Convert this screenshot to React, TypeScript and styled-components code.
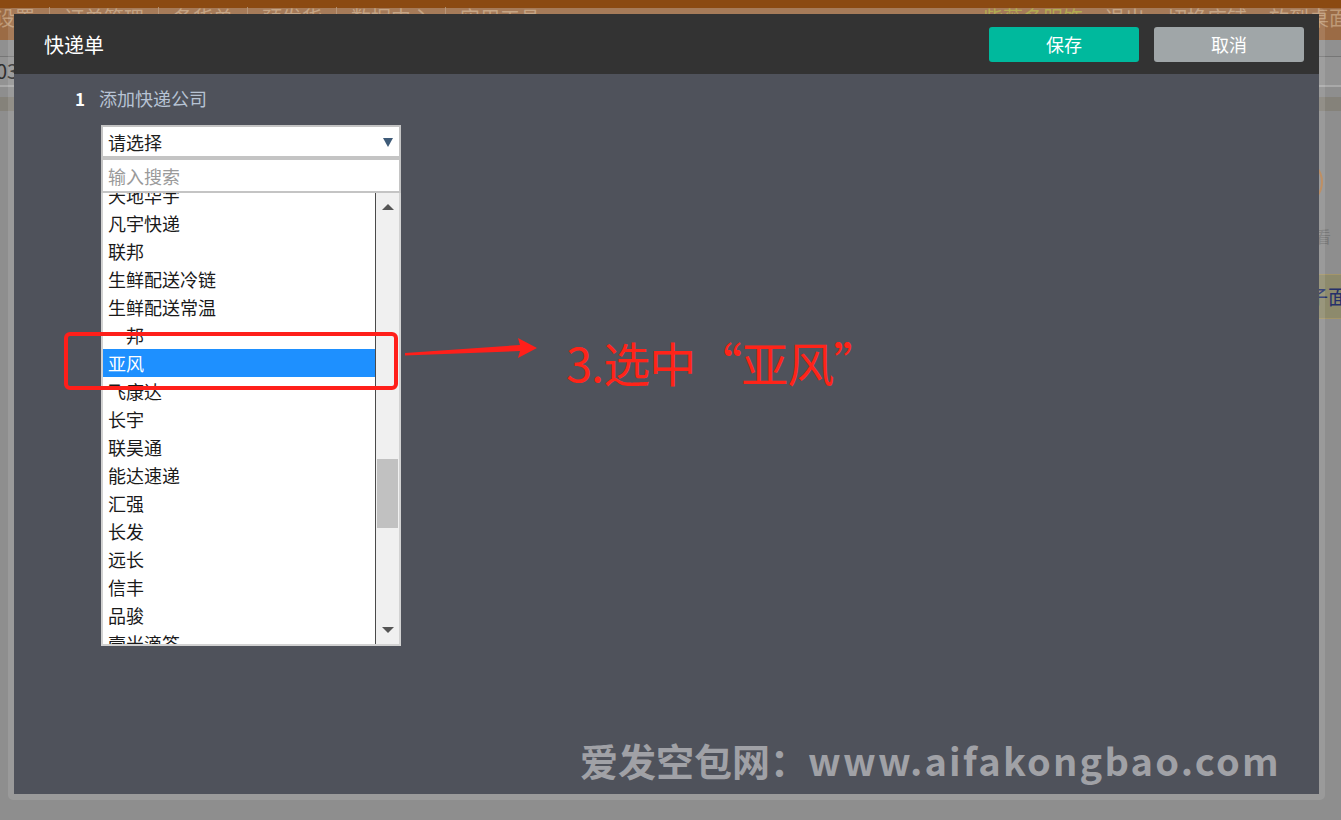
import styled, { createGlobalStyle } from 'styled-components';

const GlobalStyle = createGlobalStyle`
  html, body {
    margin: 0;
    padding: 0;
    background: #8e8e8e;
  }
  body {
    font-family: "Noto Sans CJK SC", "Noto Sans", "Liberation Sans", sans-serif;
  }
  * {
    box-sizing: border-box;
  }
`;

const Page = styled.div`
  position: relative;
  width: 1341px;
  height: 820px;
  overflow: hidden;
  background: #8e8e8e;
`;

// underlying (dimmed) shop page
const NavBar = styled.div`
  height: 40px;
  border-top: 8px solid #8b4a12;
  background: #9b6b45;
  display: flex;
  align-items: center;
  justify-content: space-between;
  font-size: 20px;
  line-height: 24px;
  color: #bf9a77;
`;

const NavGroup = styled.div<{ $edge: number }>`
  display: flex;
  align-items: center;
  margin-top: -12px;
  margin-left: ${(p) => (p.$edge < 0 ? `${p.$edge}px` : '0')};
  margin-right: ${(p) => (p.$edge > 0 ? `-${p.$edge}px` : '0')};
`;

const NavItem = styled.span<{ $accent?: boolean; $spaced?: boolean }>`
  color: ${(p) => (p.$accent ? '#aaa23c' : '#bf9a77')};
  margin-left: ${(p) => (p.$spaced ? '22px' : '0')};
  white-space: nowrap;
`;

const NavDivider = styled.span`
  width: 1px;
  height: 22px;
  background: #b08a68;
  margin: 0 14px;
`;

const SubBar = styled.div`
  height: 17px;
  background: #909090;
  border-bottom: 1px solid #767676;
`;

const InputRow = styled.div`
  height: 30px;
  background: #939393;
  border-bottom: 2px solid #a9a9a9;
  font-size: 20px;
  line-height: 28px;
  color: #2e2e2e;
  margin-left: -4px;
`;

const Spacer = styled.div`
  height: 10px;
`;

const ToolRow = styled.div`
  height: 14px;
  background: #85827a;
`;

const RightTools = styled.div`
  display: flex;
  flex-direction: column;
  align-items: flex-start;
  margin-left: 1283px;
  padding-top: 49px;
`;

const RoundIcon = styled.div`
  width: 40px;
  height: 44px;
  border-radius: 50%;
  border: 2px solid #b88250;
`;

const ToolLabel = styled.div`
  margin: 20px 0 0 16px;
  font-size: 16px;
  line-height: 24px;
  color: #777777;
  white-space: nowrap;
`;

const TanButton = styled.div`
  margin: 26px 0 0 -28px;
  height: 45px;
  padding: 0 12px;
  background: #8d8a6c;
  border: 1px solid #a3956a;
  font-size: 20px;
  line-height: 43px;
  color: #25306a;
  white-space: nowrap;
`;

// modal
const Modal = styled.div`
  position: absolute;
  top: 8px;
  left: 8px;
  width: 1317px;
  height: 792px;
  border: 6px solid rgba(255, 255, 255, 0.11);
  border-radius: 5px;
  display: flex;
  flex-direction: column;
`;

const ModalHeader = styled.div`
  height: 60px;
  background: #333333;
  display: flex;
  align-items: center;
  padding: 0 15px 0 30px;
`;

const ModalTitle = styled.div`
  flex: 1;
  font-size: 20px;
  color: #ffffff;
`;

const ActionButton = styled.div<{ $variant: 'primary' | 'secondary' }>`
  width: 150px;
  height: 35px;
  border-radius: 3px;
  background: ${(p) => (p.$variant === 'primary' ? '#00b99d' : '#a0a6a8')};
  color: #ffffff;
  font-size: 18px;
  line-height: 35px;
  text-align: center;
  margin-left: 15px;
`;

const ModalBody = styled.div`
  position: relative;
  flex: 1;
  background: #4f525b;
  padding: 12px 0 0 61px;
`;

const StepRow = styled.div`
  display: flex;
  align-items: center;
  height: 24px;
`;

const StepNum = styled.span`
  font-size: 17px;
  font-weight: 700;
  color: #ffffff;
  width: 24px;
`;

const StepText = styled.span`
  font-size: 18px;
  color: #b7c3d4;
`;

const Dropdown = styled.div`
  width: 300px;
  margin: 15px 0 0 26px;
`;

const SelectBox = styled.div`
  height: 33px;
  background: #ffffff;
  border: 2px solid #c4c4c4;
  display: flex;
  align-items: center;
  justify-content: space-between;
  padding: 0 6px 0 5px;
  font-size: 18px;
  color: #1e1e1e;
`;

const Caret = styled.span`
  width: 0;
  height: 0;
  border-left: 5px solid transparent;
  border-right: 5px solid transparent;
  border-top: 9px solid #3e5b78;
  margin-top: 2px;
`;

const SearchInput = styled.input`
  display: block;
  width: 100%;
  height: 35px;
  border: 2px solid #c4c4c4;
  padding: 0 5px;
  font-family: inherit;
  font-size: 18px;
  color: #333;
  outline: none;

  &::placeholder {
    color: #9a9a9a;
  }
`;

const ListBox = styled.div`
  height: 453px;
  background: #ffffff;
  border: 2px solid #d2d2d2;
  border-top: none;
  display: flex;
`;

const Options = styled.div`
  flex: 1;
  overflow: hidden;
`;

const OptionsInner = styled.div`
  margin-top: -12px;
`;

const Option = styled.div<{ $selected?: boolean }>`
  height: 28px;
  line-height: 28px;
  padding-left: 5px;
  font-size: 18px;
  white-space: nowrap;
  color: ${(p) => (p.$selected ? '#ffffff' : '#1a1a1a')};
  background: ${(p) => (p.$selected ? '#1e90ff' : 'transparent')};
`;

const ScrollBar = styled.div`
  width: 24px;
  background: #f0f0f0;
  border-left: 1px solid #4a4a4a;
  display: flex;
  flex-direction: column;
  align-items: center;
`;

const ScrollArrow = styled.div<{ $down?: boolean }>`
  height: 28px;
  display: flex;
  align-items: center;
  justify-content: center;
  margin-top: ${(p) => (p.$down ? 'auto' : '0')};

  &::after {
    content: '';
    width: 0;
    height: 0;
    border-left: 6px solid transparent;
    border-right: 6px solid transparent;
    ${(p) => (p.$down ? 'border-top: 6px solid #555;' : 'border-bottom: 6px solid #555;')}
  }
`;

const ScrollThumb = styled.div`
  width: 21px;
  height: 69px;
  background: #c1c1c1;
  margin-top: 238px;
`;

// annotations drawn over the dialog
const HighlightBox = styled.div`
  position: absolute;
  left: 50px;
  top: 258px;
  width: 334px;
  height: 58px;
  border: 4px solid #ff1f1a;
  border-radius: 6px;
`;

const ArrowSvg = styled.svg`
  position: absolute;
  left: 374px;
  top: 261px;
`;

const CalloutText = styled.div`
  position: absolute;
  left: 552px;
  top: 256px;
  font-size: 47px;
  line-height: 64px;
  color: #ff2419;
  white-space: nowrap;
  letter-spacing: -1px;
`;

const Watermark = styled.div`
  position: absolute;
  left: 566px;
  top: 661px;
  font-size: 38px;
  line-height: 50px;
  font-weight: 700;
  color: #a0a1a6;
  white-space: nowrap;
`;

const WatermarkUrl = styled.span`
  letter-spacing: 2.2px;
`;

const couriers = [
  '天地华宇',
  '凡宇快递',
  '联邦',
  '生鲜配送冷链',
  '生鲜配送常温',
  '\u3000邦',
  '亚风',
  '飞康达',
  '长宇',
  '联昊通',
  '能达速递',
  '汇强',
  '长发',
  '远长',
  '信丰',
  '品骏',
  '壹米滴答',
];

const leftNav = ['设置', '订单管理', '备货单', '预发货', '数据中心', '实用工具'];
const rightNav = ['退出', '切换店铺', '放到桌面'];

export default function App() {
  return (
    <>
      <GlobalStyle />
      <Page>
        <NavBar>
          <NavGroup $edge={-5}>
            {leftNav.map((item, i) => (
              <span key={item} style={{ display: 'contents' }}>
                {i > 0 && <NavDivider />}
                <NavItem>{item}</NavItem>
              </span>
            ))}
          </NavGroup>
          <NavGroup $edge={8}>
            <NavItem $accent>紫薇多服饰</NavItem>
            {rightNav.map((item) => (
              <NavItem key={item} $spaced>
                {item}
              </NavItem>
            ))}
          </NavGroup>
        </NavBar>
        <SubBar />
        <InputRow>03</InputRow>
        <Spacer />
        <ToolRow />
        <RightTools>
          <RoundIcon />
          <ToolLabel>查看</ToolLabel>
          <TanButton>打印子面单</TanButton>
        </RightTools>

        <Modal>
          <ModalHeader>
            <ModalTitle>快递单</ModalTitle>
            <ActionButton $variant="primary">保存</ActionButton>
            <ActionButton $variant="secondary">取消</ActionButton>
          </ModalHeader>
          <ModalBody>
            <StepRow>
              <StepNum>1</StepNum>
              <StepText>添加快递公司</StepText>
            </StepRow>
            <Dropdown>
              <SelectBox>
                <span>请选择</span>
                <Caret />
              </SelectBox>
              <SearchInput placeholder="输入搜索" readOnly />
              <ListBox>
                <Options>
                  <OptionsInner>
                    {couriers.map((name) => (
                      <Option key={name} $selected={name === '亚风'}>
                        {name}
                      </Option>
                    ))}
                  </OptionsInner>
                </Options>
                <ScrollBar>
                  <ScrollArrow />
                  <ScrollThumb />
                  <ScrollArrow $down />
                </ScrollBar>
              </ListBox>
            </Dropdown>

            <HighlightBox />
            <ArrowSvg width="152" height="24" viewBox="0 0 152 24">
              <polygon
                points="17,18 17,20.5 132,16 130,23 149,13 130,3 132,10"
                fill="#ff1f1a"
              />
            </ArrowSvg>
            <CalloutText>3.选中“亚风”</CalloutText>
            <Watermark>
              爱发空包网：<WatermarkUrl>www.aifakongbao.com</WatermarkUrl>
            </Watermark>
          </ModalBody>
        </Modal>
      </Page>
    </>
  );
}
